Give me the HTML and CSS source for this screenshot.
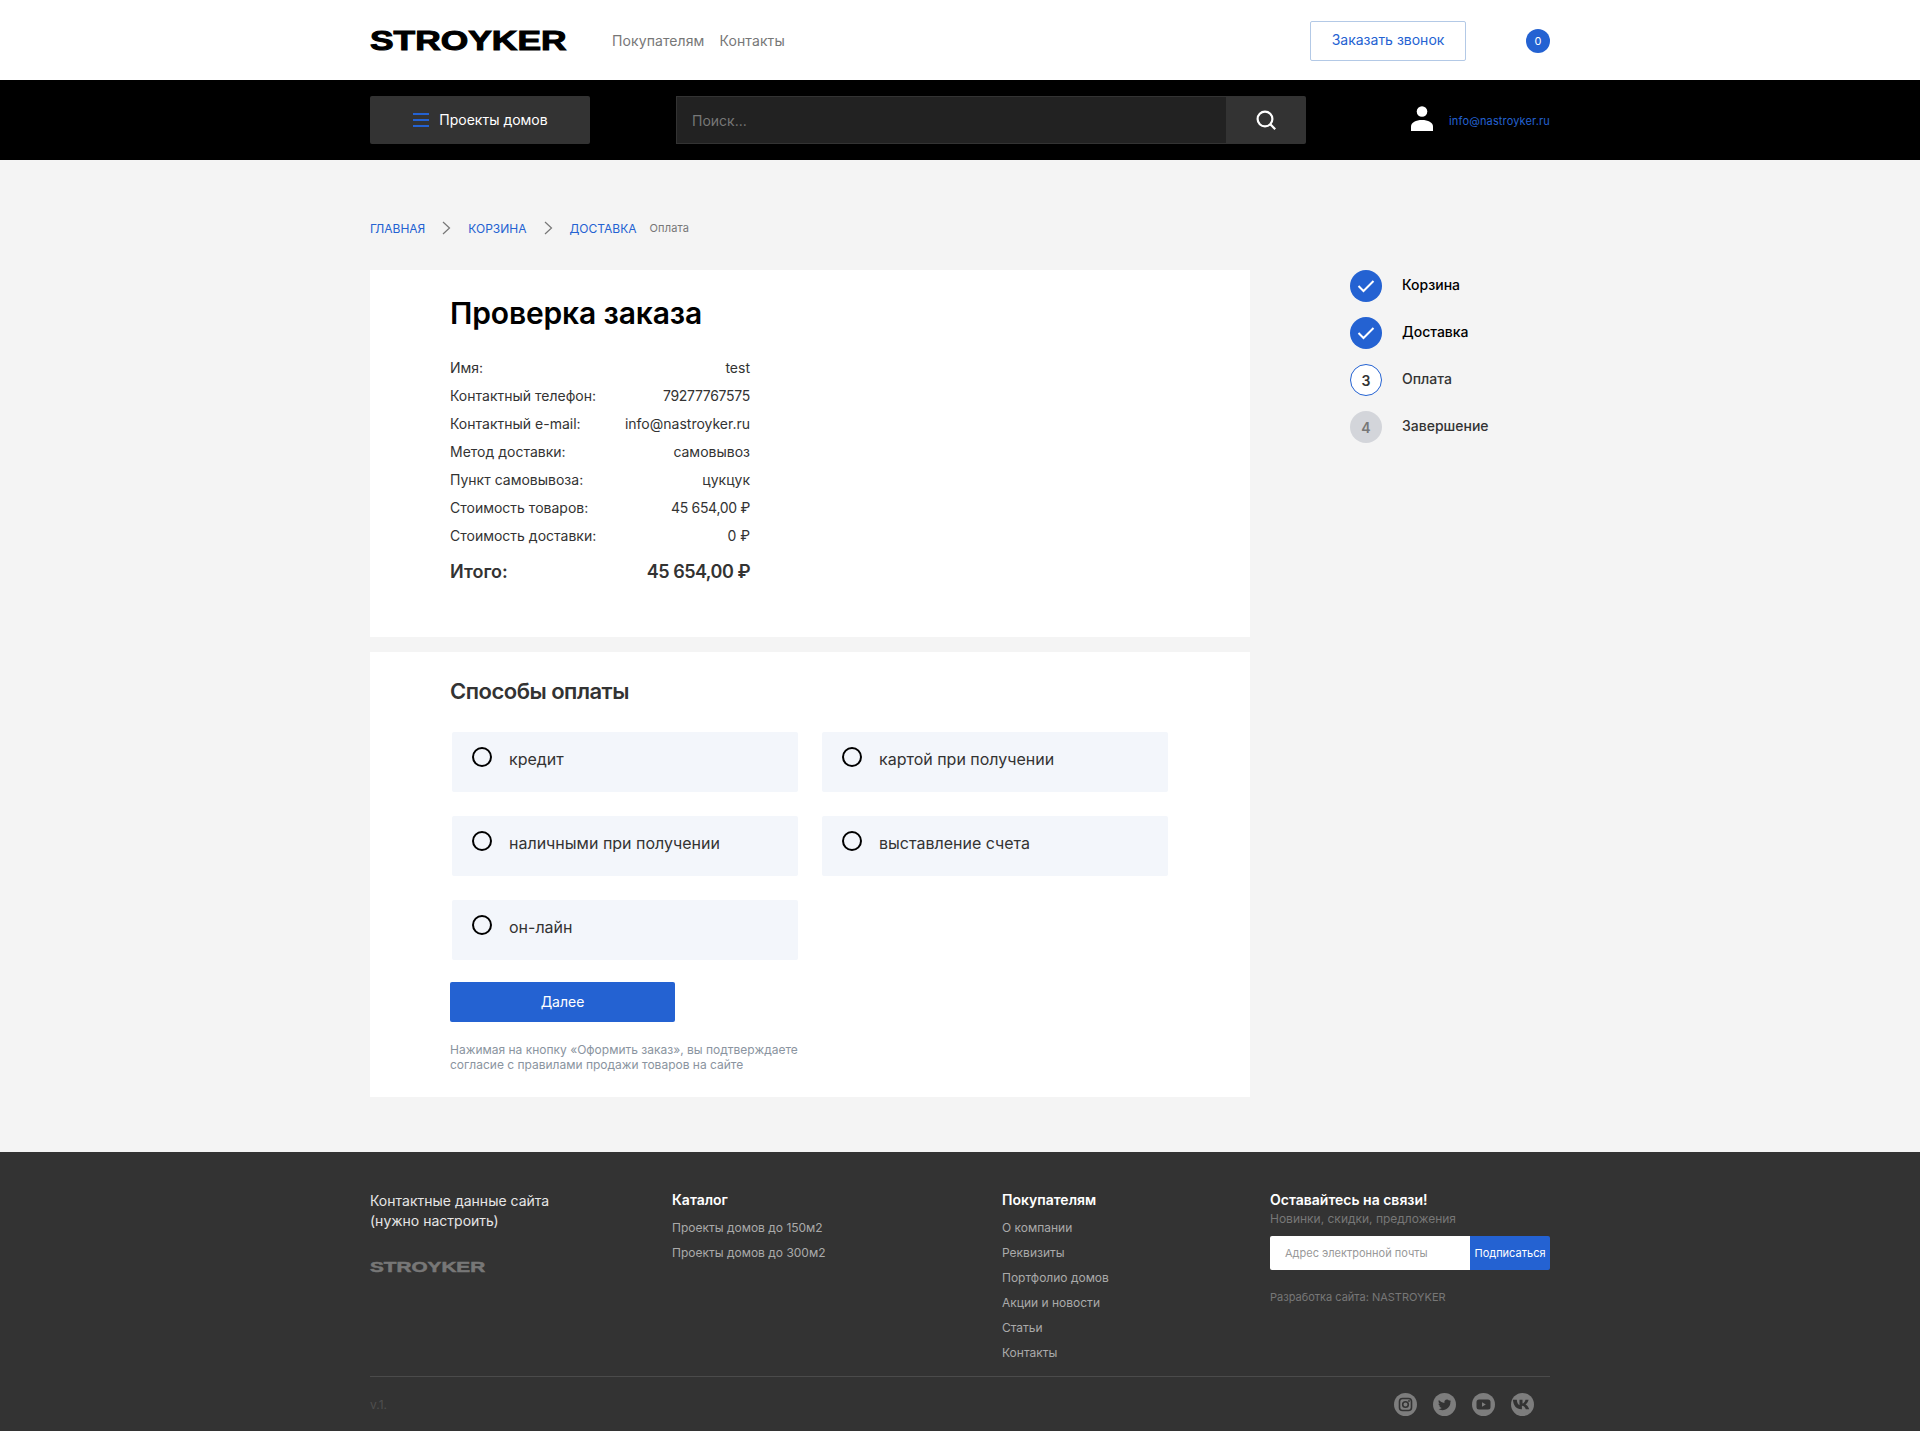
FILE: index.html
```html
<!DOCTYPE html>
<html>
<head>
	<meta charset="UTF-8">
	<title>Проверка заказа</title>
	<link rel="stylesheet" href="styles.css">
</head>
<body>
	<header class="top">
		<div class="wrap top-row">
			<a class="logo"><span>STROYKER</span></a>
			<nav class="top-nav">
				<a>Покупателям</a>
				<a>Контакты</a>
			</nav>
			<a class="call-btn">Заказать звонок</a>
			<span class="cart-badge">0</span>
		</div>
	</header>

	<div class="bar">
		<div class="wrap bar-row">
			<a class="catalog-btn">
				<span class="burger"><i></i><i></i><i></i></span>
				<span class="catalog-name">Проекты домов</span>
			</a>
			<div class="search">
				<div class="search-input">Поиск...</div>
				<div class="search-btn">
					<svg width="22" height="22" viewBox="0 0 22 22" fill="none" stroke="#fff" stroke-width="2.2"><circle cx="10" cy="10" r="7.4"/><path d="M15.4 15.4l4.8 4.8"/></svg>
				</div>
			</div>
			<div class="user">
				<svg class="user-icon" width="22" height="25" viewBox="0 0 22 25" fill="#fff"><circle cx="11" cy="5.500" r="5.300"/><path d="M0 25v-4.500c0-4 5-6.500 11-6.500s11 2.500 11 6.500V25z"/></svg>
				<a class="user-mail">info@nastroyker.ru</a>
			</div>
		</div>
	</div>

	<main class="page">
		<div class="wrap">
			<div class="crumbs">
				<a>ГЛАВНАЯ</a>
				<svg class="crumb-arrow" width="9" height="14" viewBox="0 0 9 14" fill="none" stroke="#777" stroke-width="1.2"><path d="M1 1l6.500 6L1 13"/></svg>
				<a>КОРЗИНА</a>
				<svg class="crumb-arrow" width="9" height="14" viewBox="0 0 9 14" fill="none" stroke="#777" stroke-width="1.2"><path d="M1 1l6.500 6L1 13"/></svg>
				<a>ДОСТАВКА</a>
				<span class="crumb-now">Оплата</span>
			</div>

			<div class="columns">
				<div class="content">
					<section class="card card-order">
						<h1>Проверка заказа</h1>
						<div class="order-list">
							<div class="order-row"><span>Имя:</span><span>test</span></div>
							<div class="order-row"><span>Контактный телефон:</span><span class="order-num">79277767575</span></div>
							<div class="order-row"><span>Контактный e-mail:</span><span>info@nastroyker.ru</span></div>
							<div class="order-row"><span>Метод доставки:</span><span>самовывоз</span></div>
							<div class="order-row"><span>Пункт самовывоза:</span><span>цукцук</span></div>
							<div class="order-row"><span>Стоимость товаров:</span><span class="order-num">45 654,00 ₽</span></div>
							<div class="order-row"><span>Стоимость доставки:</span><span>0 ₽</span></div>
							<div class="order-row order-total"><span>Итого:</span><span class="order-num">45 654,00 ₽</span></div>
						</div>
					</section>

					<section class="card card-pay">
						<h2>Способы оплаты</h2>
						<div class="pay-grid">
							<label class="pay-item"><i class="radio"></i>кредит</label>
							<label class="pay-item"><i class="radio"></i>картой при получении</label>
							<label class="pay-item"><i class="radio"></i>наличными при получении</label>
							<label class="pay-item"><i class="radio"></i>выставление счета</label>
							<label class="pay-item"><i class="radio"></i>он-лайн</label>
						</div>
						<a class="next-btn">Далее</a>
						<p class="pay-note">Нажимая на кнопку «Оформить заказ», вы подтверждаете<br>согласие с правилами продажи товаров на сайте</p>
					</section>
				</div>

				<aside class="steps">
					<div class="step step-done">
						<span class="step-num"><svg width="18" height="14" viewBox="0 0 18 14" fill="none" stroke="#fff" stroke-width="2"><path d="M1.500 7l5 5 10-10"/></svg></span>
						<span class="step-name">Корзина</span>
					</div>
					<div class="step step-done">
						<span class="step-num"><svg width="18" height="14" viewBox="0 0 18 14" fill="none" stroke="#fff" stroke-width="2"><path d="M1.500 7l5 5 10-10"/></svg></span>
						<span class="step-name">Доставка</span>
					</div>
					<div class="step step-active">
						<span class="step-num">3</span>
						<span class="step-name">Оплата</span>
					</div>
					<div class="step step-next">
						<span class="step-num">4</span>
						<span class="step-name">Завершение</span>
					</div>
				</aside>
			</div>
		</div>
	</main>

	<footer class="foot">
		<div class="wrap">
			<div class="foot-cols">
				<div class="foot-col foot-col-a">
					<p class="foot-contacts">Контактные данные сайта<br>(нужно настроить)</p>
					<a class="logo logo-small"><span>STROYKER</span></a>
				</div>
				<div class="foot-col foot-col-b">
					<h4>Каталог</h4>
					<a>Проекты домов до 150м2</a>
					<a>Проекты домов до 300м2</a>
				</div>
				<div class="foot-col foot-col-c">
					<h4>Покупателям</h4>
					<a>О компании</a>
					<a>Реквизиты</a>
					<a>Портфолио домов</a>
					<a>Акции и новости</a>
					<a>Статьи</a>
					<a>Контакты</a>
				</div>
				<div class="foot-col foot-col-d">
					<h4>Оставайтесь на связи!</h4>
					<p class="foot-sub">Новинки, скидки, предложения</p>
					<div class="subscribe">
						<div class="subscribe-input">Адрес электронной почты</div>
						<div class="subscribe-btn">Подписаться</div>
					</div>
					<p class="foot-dev">Разработка сайта: NASTROYKER</p>
				</div>
			</div>
			<div class="foot-bottom">
				<span class="foot-ver">v.1.</span>
				<div class="socials">
					<svg width="23" height="23" viewBox="0 0 23 23"><circle cx="11.500" cy="11.500" r="11.500" fill="#7d7d7d"/><rect x="5.500" y="5.500" width="12" height="12" rx="3" fill="none" stroke="#333" stroke-width="1.600"/><circle cx="11.500" cy="11.500" r="2.800" fill="none" stroke="#333" stroke-width="1.600"/><circle cx="15" cy="8" r=".9" fill="#333"/></svg>
					<svg width="23" height="23" viewBox="0 0 23 23"><circle cx="11.500" cy="11.500" r="11.500" fill="#7d7d7d"/><path d="M18 7.700c-.5.2-1 .4-1.500.4.500-.3 1-.8 1.200-1.400-.5.3-1.100.5-1.700.7a2.700 2.700 0 0 0-4.600 2.500c-2.200-.1-4.200-1.200-5.500-2.800-.7 1.200-.4 2.800.8 3.600-.4 0-.8-.1-1.200-.3 0 1.300.9 2.400 2.100 2.700-.4.100-.8.100-1.200 0 .3 1.100 1.300 1.800 2.500 1.900A5.400 5.400 0 0 1 5 16.100c5.800 3.100 12.700-.7 12.400-7.300.2-.3.400-.700.600-1.100z" fill="#333"/></svg>
					<svg width="23" height="23" viewBox="0 0 23 23"><circle cx="11.500" cy="11.500" r="11.500" fill="#7d7d7d"/><rect x="4.500" y="6.500" width="14" height="10" rx="2.500" fill="#333"/><path d="M10 9.300v4.400l3.800-2.200z" fill="#7d7d7d"/></svg>
					<svg width="24" height="23" viewBox="0 0 24 23"><circle cx="11.500" cy="11.500" r="11.500" fill="#7d7d7d"/><path d="M2.500 6.800h3.300c.2 3 1.400 5 2.700 5.400V6.800h3v3.700c1.200-.1 2.500-1.600 3-3.700h3.100c-.5 2.300-2 3.900-3.100 4.600 1.100.6 2.900 2 3.700 4.800h-3.400c-.6-1.900-2-3.300-3.900-3.500v3.500h-.4c-5.400 0-8-3.600-8.600-9.400z" fill="#333"/></svg>
				</div>
			</div>
		</div>
	</footer>
</body>
</html>
```
FILE: styles.css
```css
* {
	box-sizing: border-box;
}

body {
	margin: 0;
	font-family: Inter, "Noto Sans", sans-serif;
	font-size: 14px;
	color: #333;
	background: #f4f4f4;
}

h1, h2, h4, p {
	margin: 0;
}

.wrap {
	width: 1180px;
	margin: 0 auto;
}

/* logo */
.logo {
	display: block;
	width: 197px;
	height: 20px;
	margin-top: 1px;
	overflow: visible;
}

.logo span {
	display: block;
	font-family: "Liberation Sans", sans-serif;
	font-size: 27px;
	line-height: 20px;
	font-weight: 700;
	color: #000;
	-webkit-text-stroke: 1px #000;
	transform: scaleX(1.31);
	transform-origin: left center;
	white-space: nowrap;
}

/* top */
.top {
	height: 80px;
	background: #fff;
}

.top-row {
	display: flex;
	align-items: center;
	height: 80px;
}

.top-nav {
	display: flex;
	gap: 15px;
	margin-left: 45px;
	color: #777;
	letter-spacing: .1px;
}

.call-btn {
	width: 156px;
	height: 40px;
	margin: 2px 0 0 auto;
	border: 1px solid #b3c9e6;
	border-radius: 2px;
	color: #2462d2;
	text-align: center;
	line-height: 36px;
}

.cart-badge {
	width: 24px;
	height: 24px;
	margin: 2px 0 0 60px;
	border-radius: 50%;
	background: #2462d2;
	color: #fff;
	font-size: 11px;
	text-align: center;
	line-height: 24px;
}

/* black bar */
.bar {
	height: 80px;
	background: #000;
}

.bar-row {
	display: flex;
	align-items: center;
	height: 80px;
}

.catalog-btn {
	display: flex;
	align-items: center;
	justify-content: center;
	gap: 10px;
	width: 220px;
	height: 48px;
	padding-left: 1px;
	border-radius: 2px;
	background: #333;
	color: #fff;
}

.catalog-name {
	margin-bottom: 2px;
}

.burger {
	display: flex;
	flex-direction: column;
	gap: 4px;
	width: 16px;
}

.burger i {
	display: block;
	height: 2px;
	background: #2462d2;
}

.search {
	display: flex;
	width: 630px;
	height: 48px;
	margin-left: 86px;
}

.search-input {
	flex: 1;
	padding-left: 15px;
	border: 1px solid #333;
	border-right: 0;
	background: #222;
	color: #777;
	line-height: 48px;
}

.search-btn {
	display: flex;
	align-items: center;
	justify-content: center;
	width: 80px;
	border-radius: 0 2px 2px 0;
	background: #333;
}

.user {
	display: flex;
	align-items: center;
	gap: 16px;
	margin-left: auto;
}

.user-icon {
	margin-top: -3px;
}

.user-mail {
	margin-top: 1px;
	color: #2462d2;
	font-size: 11px;
	letter-spacing: .15px;
}

/* page */
.page {
	height: 992px;
	padding-top: 60px;
}

.crumbs {
	display: flex;
	align-items: center;
	height: 16px;
	font-size: 12px;
	color: #2462d2;
}

.crumb-arrow {
	margin: 0 17px;
}

.crumb-now {
	margin-left: 13px;
	color: #777;
	font-size: 11px;
	letter-spacing: .15px;
}

.columns {
	display: flex;
	margin-top: 34px;
}

.content {
	width: 880px;
}

.card {
	background: #fff;
	padding-left: 80px;
}

.card-order {
	height: 367px;
	padding-top: 24px;
}

.card-order h1 {
	font-size: 30px;
	line-height: 38px;
	font-weight: 600;
	color: #000;
	letter-spacing: -.15px;
}

.order-list {
	width: 300px;
	margin-top: 22px;
}

.order-row {
	display: flex;
	justify-content: space-between;
	height: 28px;
	line-height: 28px;
}

.order-num {
	letter-spacing: -.3px;
}

.order-total {
	height: 36px;
	margin-top: 4px;
	font-size: 18px;
	font-weight: 600;
	line-height: 36px;
}

.order-total .order-num {
	letter-spacing: -.5px;
}

.card-pay {
	height: 445px;
	margin-top: 15px;
	padding-top: 25px;
}

.card-pay h2 {
	font-size: 22px;
	line-height: 28px;
	font-weight: 600;
	letter-spacing: -.5px;
}

.pay-grid {
	display: grid;
	grid-template-columns: 346px 346px;
	column-gap: 24px;
	row-gap: 24px;
	margin: 27px 0 0 2px;
}

.pay-item {
	display: flex;
	align-items: flex-start;
	height: 60px;
	padding: 15px 20px;
	border-radius: 2px;
	background: #f3f6fb;
	font-size: 16px;
	line-height: 24px;
}

.radio {
	flex: none;
	width: 20px;
	height: 20px;
	margin-right: 17px;
	border: 2px solid #000;
	border-radius: 50%;
}

.next-btn {
	display: block;
	width: 225px;
	height: 40px;
	margin-top: 22px;
	border-radius: 2px;
	background: #2462d2;
	color: #fff;
	text-align: center;
	line-height: 40px;
}

.pay-note {
	margin-top: 20px;
	font-size: 12px;
	line-height: 15px;
	color: #8a94a0;
}

/* steps */
.steps {
	display: flex;
	flex-direction: column;
	gap: 15px;
	margin-left: 100px;
}

.step {
	display: flex;
	align-items: center;
	gap: 20px;
	font-weight: 500;
}

.step-name {
	margin-bottom: 3px;
}

.step-num {
	display: flex;
	align-items: center;
	justify-content: center;
	width: 32px;
	height: 32px;
	border-radius: 50%;
	font-weight: 600;
}

.step-done .step-num {
	background: #2462d2;
}

.step-done .step-name {
	color: #000;
}

.step-active .step-num {
	border: 1px solid #2462d2;
	background: #fff;
}

.step-next .step-num {
	background: #d3d5da;
	color: #777;
}

/* footer */
.foot {
	height: 279px;
	background: #333;
	color: #fff;
}

.foot-cols {
	display: flex;
	height: 225px;
	border-bottom: 1px solid #4b4b4b;
	padding-top: 39px;
}

.foot-col a {
	display: block;
	color: #aaa;
	font-size: 12px;
	line-height: 25px;
}

.foot-col h4 {
	font-size: 14px;
	line-height: 17px;
	font-weight: 600;
	margin-bottom: 7px;
}

.foot-col-a {
	width: 302px;
}

.foot-col-b {
	width: 330px;
}

.foot-col-c {
	width: 268px;
}

.foot-col-d {
	width: 280px;
}

.foot-contacts {
	line-height: 20px;
	color: #e6e6e6;
}

.foot-col .logo-small {
	width: 115px;
	height: 10px;
	margin-top: 31px;
	line-height: 10px;
}

.logo-small span {
	font-size: 14px;
	line-height: 10px;
	color: #777;
	-webkit-text-stroke: .5px #777;
	transform: scaleX(1.48);
}

.foot-sub {
	margin-top: -6px;
	font-size: 12px;
	line-height: 20px;
	color: #777;
}

.subscribe {
	display: flex;
	height: 34px;
	margin-top: 7px;
	font-size: 11px;
	line-height: 34px;
}

.subscribe-input {
	width: 200px;
	padding-left: 15px;
	border-radius: 2px 0 0 2px;
	background: #fff;
	color: #999;
}

.subscribe-btn {
	width: 80px;
	border-radius: 0 2px 2px 0;
	background: #2462d2;
	color: #fff;
	text-align: center;
	white-space: nowrap;
}

.foot-dev {
	margin-top: 20px;
	font-size: 11px;
	line-height: 14px;
	color: #777;
}

.foot-bottom {
	display: flex;
	justify-content: space-between;
	align-items: center;
	height: 54px;
}

.foot-ver {
	color: #4f4f4f;
	font-size: 12px;
}

.socials {
	display: flex;
	gap: 16px;
	margin-right: 15px;
}
```
